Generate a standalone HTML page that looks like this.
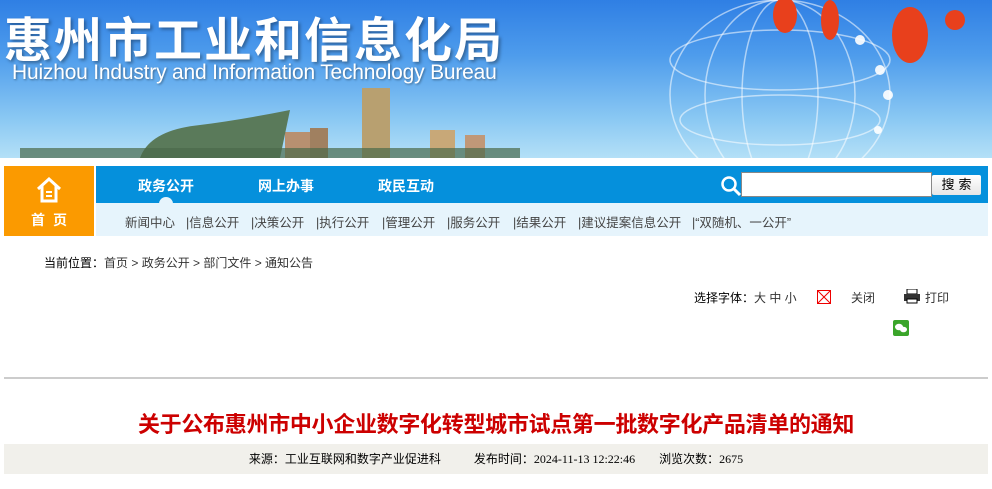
<!DOCTYPE html>
<html><head><meta charset="utf-8"><style>
*{margin:0;padding:0;box-sizing:border-box}
body{width:992px;height:489px;background:#fff;font-family:"Liberation Sans","Noto Sans CJK SC",sans-serif;position:relative;overflow:hidden}
.a{position:absolute}
#banner{left:0;top:0;width:992px;height:158px;background:linear-gradient(180deg,#2f7fe4 0%,#4e9cec 35%,#8ac8f3 75%,#b4e0f7 100%);overflow:hidden}
.t1{left:4px;top:4px;font-size:48px;font-weight:bold;color:#fff;letter-spacing:2px;text-shadow:2px 2px 3px rgba(0,0,0,.35);font-family:"Noto Sans CJK SC",sans-serif;line-height:64px}
.t2{left:12px;top:61px;font-size:21px;color:#fff;text-shadow:1px 1px 2px rgba(0,0,0,.4);letter-spacing:-.2px}
.nav1{left:96px;top:166px;width:892px;height:37px;background:#0590dc}
.nav2{left:96px;top:203px;width:892px;height:33px;background:#e6f4fc}
.home{left:4px;top:166px;width:90px;height:70px;background:#fb9a00;color:#fff}
.m{top:176px;font-size:14px;font-weight:bold;color:#fff}
.s{top:212px;font-size:12.5px;color:#444}
</style></head><body>
<div id="banner" class="a">
 <div class="a t1">惠州市工业和信息化局</div>
 <div class="a t2">Huizhou Industry and Information Technology Bureau</div>
 <svg class="a" style="left:0;top:0" width="992" height="158">
  <g fill="none" stroke="rgba(255,255,255,.55)" stroke-width="1.5">
   <ellipse cx="780" cy="95" rx="110" ry="95"/><ellipse cx="780" cy="95" rx="75" ry="95"/><ellipse cx="780" cy="95" rx="38" ry="95"/>
   <ellipse cx="780" cy="60" rx="110" ry="30"/><ellipse cx="780" cy="120" rx="100" ry="25"/>
  </g>
  <g fill="#e8401c"><ellipse cx="785" cy="15" rx="12" ry="18"/><ellipse cx="830" cy="20" rx="9" ry="20"/><ellipse cx="910" cy="35" rx="18" ry="28"/><circle cx="955" cy="20" r="10"/></g>
  <g fill="#fff" opacity=".9"><circle cx="860" cy="40" r="5"/><circle cx="880" cy="70" r="5"/><circle cx="888" cy="95" r="5"/><circle cx="878" cy="130" r="4"/></g>
  <rect x="362" y="88" width="28" height="70" fill="#b8a070"/><rect x="285" y="132" width="30" height="26" fill="#b89070"/><rect x="310" y="128" width="18" height="30" fill="#a08060"/><rect x="430" y="130" width="25" height="28" fill="#c8a878"/><rect x="465" y="135" width="20" height="23" fill="#c09878"/>
  <path d="M140 158 Q150 130 200 125 Q240 120 290 110 L280 158Z" fill="#5a7a5a"/>
  <rect x="20" y="148" width="500" height="10" fill="#4a6a4a" opacity=".7"/>
 </svg>
</div>
<div class="a home">
 <svg class="a" style="left:31px;top:10px" width="28" height="28" viewBox="0 0 28 28"><path d="M3 13 L14 3 L25 13 M7 10 V25 H21 V10" fill="none" stroke="#fff" stroke-width="3"/><rect x="11" y="15" width="6" height="2" fill="#fff"/><rect x="11" y="19" width="6" height="2" fill="#fff"/></svg>
 <div class="a" style="left:0;width:90px;top:44px;text-align:center;font-size:14px;font-weight:bold;letter-spacing:8px;text-indent:8px">首页</div>
</div>
<div class="a nav1"></div>
<div class="a nav2"></div>
<div class="a" style="left:159px;top:197px;width:14px;height:12px;border-radius:7px 7px 0 0;background:#e6f4fc"></div>
<div class="a m" style="left:138px">政务公开</div>
<div class="a m" style="left:258px">网上办事</div>
<div class="a m" style="left:378px">政民互动</div>
<svg class="a" style="left:720px;top:175px" width="22" height="22"><circle cx="9" cy="9" r="6.5" fill="none" stroke="#fff" stroke-width="2.5"/><path d="M14 14 L20 20" stroke="#fff" stroke-width="3"/></svg>
<div class="a" style="left:741px;top:172px;width:191px;height:25px;background:#fff;border:1px solid #888"></div>
<div class="a" style="left:932px;top:175px;width:49px;height:20px;background:linear-gradient(#fff,#e6e6e6);border-radius:2px;font-size:13px;text-align:center;line-height:20px;color:#000;letter-spacing:4px;text-indent:4px">搜索</div>
<div class="a s" style="left:125px">新闻中心</div>
<div class="a s" style="left:186px">|信息公开</div>
<div class="a s" style="left:251px">|决策公开</div>
<div class="a s" style="left:316px">|执行公开</div>
<div class="a s" style="left:382px">|管理公开</div>
<div class="a s" style="left:447px">|服务公开</div>
<div class="a s" style="left:513px">|结果公开</div>
<div class="a s" style="left:578px">|建议提案信息公开</div>
<div class="a s" style="left:692px">|“双随机、一公开”</div>
<div class="a" style="left:44px;top:254px;font-size:12px;color:#333"><span style="color:#000">当前位置：</span>首页 &gt; 政务公开 &gt; 部门文件 &gt; 通知公告</div>
<div class="a" style="left:694px;top:289px;font-size:12px;color:#000">选择字体：<span style="color:#333">大 中 小</span></div>
<div class="a" style="left:817px;top:290px;width:14px;height:14px;border:1px solid #e00"><svg width="12" height="12" style="display:block"><path d="M0 0L12 12M12 0L0 12" stroke="#e00"/></svg></div>
<div class="a" style="left:851px;top:289px;font-size:12px;color:#333">关闭</div>
<svg class="a" style="left:903px;top:289px" width="18" height="15"><rect x="4" y="0" width="10" height="5" fill="#fff" stroke="#000"/><rect x="1" y="5" width="16" height="7" fill="#333"/><rect x="4" y="10" width="10" height="4" fill="#fff" stroke="#000"/></svg>
<div class="a" style="left:925px;top:289px;font-size:12px;color:#333">打印</div>
<div class="a" style="left:893px;top:320px;width:16px;height:16px;background:#3aa52a;border-radius:2px"><svg width="16" height="16"><ellipse cx="6" cy="7" rx="4" ry="3.2" fill="#fff"/><ellipse cx="10.5" cy="9.5" rx="3.5" ry="2.8" fill="#fff"/></svg></div>
<div class="a" style="left:4px;top:377px;width:984px;height:2px;background:#ccc"></div>
<div class="a" style="left:0;width:992px;top:407px;text-align:center;font-size:22px;font-weight:bold;color:#cc0000;letter-spacing:-.3px">关于公布惠州市中小企业数字化转型城市试点第一批数字化产品清单的通知</div>
<div class="a" style="left:4px;top:444px;width:984px;height:30px;background:#f1f0eb;font-size:12px;color:#000;line-height:30px;text-align:center;font-family:'Liberation Serif','Noto Sans CJK SC',serif">来源：工业互联网和数字产业促进科&nbsp;&nbsp;&nbsp;&nbsp;&nbsp;&nbsp;&nbsp;&nbsp;&nbsp;&nbsp;&nbsp;发布时间：2024-11-13 12:22:46&nbsp;&nbsp;&nbsp;&nbsp;&nbsp;&nbsp;&nbsp;&nbsp;浏览次数：2675</div>
</body></html>
